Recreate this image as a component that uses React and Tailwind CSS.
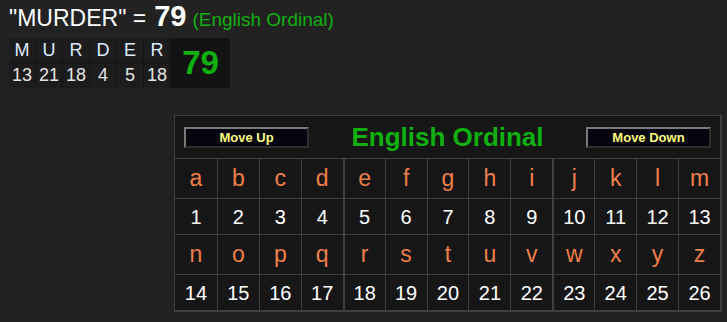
import React from "react";

const word = "MURDER";
const ordinal = (ch) => ch.toLowerCase().charCodeAt(0) - 96;

const firstHalf = "abcdefghijklm".split("");
const secondHalf = "nopqrstuvwxyz".split("");

const cellBorder = (i) =>
  i === 0 ? "" : i === 4 || i === 9 ? "border-l-2" : "border-l";

const LetterRow = ({ letters }) => (
  <div className="grid grid-cols-13 border-t border-[#3f3f3f]">
    {letters.map((l, i) => (
      <div
        key={l}
        className={`h-[39px] flex items-center justify-center text-[23px] text-[#ef7f48] border-[#3f3f3f] ${cellBorder(i)}`}
      >
        {l}
      </div>
    ))}
  </div>
);

const NumberRow = ({ letters }) => (
  <div className="grid grid-cols-13 border-t border-[#3f3f3f]">
    {letters.map((l, i) => (
      <div
        key={l}
        className={`h-[35px] flex items-center justify-center text-[20px] text-white border-[#3f3f3f] ${cellBorder(i)}`}
      >
        {ordinal(l)}
      </div>
    ))}
  </div>
);

const MoveButton = ({ children }) => (
  <button className="w-[125px] h-[21px] bg-[#05050f] border-2 border-t-[#7a7a7a] border-l-[#7a7a7a] border-b-[#2e2e2e] border-r-[#2e2e2e] text-[13px] font-bold text-[#ffff80] leading-none">
    {children}
  </button>
);

export default function App() {
  const total = word.split("").reduce((s, c) => s + ordinal(c), 0);

  return (
    <div
      className="w-[727px] h-[322px] bg-[#222222] overflow-hidden"
      style={{ fontFamily: '"Liberation Sans", Arial, sans-serif' }}
    >
      {/* heading */}
      <div className="pl-[9px] pt-[2px] h-[38px] flex items-baseline whitespace-nowrap leading-none">
        <span className="text-[23px] text-white">"{word}" =</span>
        <span className="text-[29px] font-bold text-white ml-[8px]">{total}</span>
        <span className="text-[19px] text-[#11b011] ml-[6px]">(English Ordinal)</span>
      </div>

      {/* word breakdown */}
      <div className="ml-[9px] flex w-fit bg-[#131313]">
        <div className="flex flex-col">
          <div className="flex">
            {word.split("").map((c, i) => (
              <div
                key={i}
                className="w-[27px] h-[25px] flex items-center justify-center text-[18px] text-[#dcecff] bg-[#1c1c1c] border-r border-b border-[#131313]"
              >
                {c}
              </div>
            ))}
          </div>
          <div className="flex">
            {word.split("").map((c, i) => (
              <div
                key={i}
                className="w-[27px] h-[25px] flex items-center justify-center text-[18px] text-[#e4e4e4] bg-[#1c1c1c] border-r border-[#131313]"
              >
                {ordinal(c)}
              </div>
            ))}
          </div>
        </div>
        <div className="w-[59px] flex items-center justify-center text-[33px] font-bold text-[#11b011]">
          {total}
        </div>
      </div>

      {/* cipher chart */}
      <div className="flex justify-end pr-[5px] mt-[27px]">
        <div className="w-[548px] bg-[#161616] border-t border-l border-r-2 border-b-2 border-[#3f3f3f]">
          <div className="h-[42px] flex items-center justify-between px-[9px]">
            <MoveButton>Move Up</MoveButton>
            <span className="text-[26px] font-bold text-[#10b010] pt-[1px]">English Ordinal</span>
            <MoveButton>Move Down</MoveButton>
          </div>
          <LetterRow letters={firstHalf} />
          <NumberRow letters={firstHalf} />
          <LetterRow letters={secondHalf} />
          <NumberRow letters={secondHalf} />
        </div>
      </div>
    </div>
  );
}
